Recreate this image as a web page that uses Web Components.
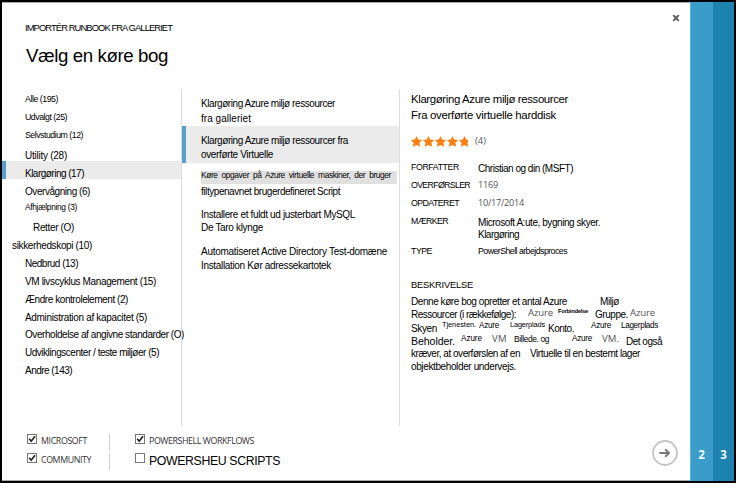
<!DOCTYPE html>
<html lang="da">
<head>
<meta charset="utf-8">
<title>Vælg en køre bog</title>
<style>
html,body{margin:0;width:736px;height:483px;overflow:hidden;background:#000}
</style>
</head>
<body>
<runbook-dialog></runbook-dialog>
<script>
// Text run with a set size, baseline (b, from the top of its row) and width (w).
class FitText extends HTMLElement {
  connectedCallback() {
    if (this.shadowRoot) return;
    const r = this.attachShadow({mode: 'open'});
    r.innerHTML = `<style>
      :host{display:block;flex:none;height:0;white-space:pre;color:#000}
      :host([ui]) span{font-family:"Open Sans","Noto Sans",sans-serif}
      :host([ui]){color:#555}
      :host([bold]) span{font-weight:700}
      span{display:inline-block;font-family:"Liberation Sans",Arial,sans-serif;vertical-align:top}
    </style><span></span>`;
    const s = r.querySelector('span');
    s.textContent = this.getAttribute('t');
    const size = +this.getAttribute('s'), b = +this.getAttribute('b'), w = +this.getAttribute('w');
    const k = this.hasAttribute('ui') ? .388 : .3465;
    s.style.fontSize = size + 'px';
    const lh = 2 * (b - k * size);
    s.style.lineHeight = Math.max(lh, 0) + 'px';
    this.style.marginLeft = (this.getAttribute('gap') || 0) + 'px';
    this.style.width = w + 'px';
    const n = s.textContent.length;
    s.style.letterSpacing = ((w - s.getBoundingClientRect().width) / n) + 'px';
  }
}
customElements.define('fit-text', FitText);

class TextRow extends HTMLElement {
  connectedCallback() {
    if (this.shadowRoot) return;
    this.attachShadow({mode: 'open'}).innerHTML = `<style>
      :host{display:flex;align-items:flex-start;box-sizing:border-box;height:var(--h,18px);padding-left:var(--p,0)}
    </style><slot></slot>`;
  }
}
customElements.define('text-row', TextRow);

class CategoryItem extends HTMLElement {
  connectedCallback() {
    if (this.shadowRoot) return;
    const a = n => this.getAttribute(n);
    this.attachShadow({mode: 'open'}).innerHTML = `<style>
      :host{display:flex;height:18px;box-sizing:border-box;padding-left:${(a('x') || 25) - 6}px;border-left:4px solid transparent}
      :host([selected]){background:#ebebeb;border-left-color:#569fd3}
    </style><fit-text s="${a('s') || 10}" b="${a('b') || 16}" w="${a('w')}" t="${a('t')}"></fit-text>`;
  }
}
customElements.define('category-item', CategoryItem);

class RunbookItem extends HTMLElement {
  connectedCallback() {
    if (this.shadowRoot) return;
    this.attachShadow({mode: 'open'}).innerHTML = `<style>
      :host{display:block;box-sizing:border-box;height:var(--h);padding-left:15px;border-left:4px solid transparent}
      :host([selected]){background:#ebebeb;border-left-color:#569fd3}
    </style><slot></slot>`;
  }
}
customElements.define('runbook-item', RunbookItem);

class CheckBox extends HTMLElement {
  connectedCallback() {
    if (this.shadowRoot) return;
    const on = this.hasAttribute('checked');
    this.attachShadow({mode: 'open'}).innerHTML = `<style>
      :host{display:flex;height:19px;gap:4px}
      svg{display:block;flex:none}
    </style><svg width="10" height="11" viewBox="0 0 10 11"><rect x=".5" y=".5" width="9" height="9" fill="#fff" stroke="#777"/>${on ? '<path d="M2.2 4.8L4.2 7.2L8 2.3" fill="none" stroke="#222" stroke-width="1.7"/>' : ''}</svg><slot></slot>`;
  }
}
customElements.define('check-box', CheckBox);

class StarRating extends HTMLElement {
  connectedCallback() {
    if (this.shadowRoot) return;
    const p = 'M5.5 0L7.2 3.5L11.1 4.1L8.4 6.8L9.2 10.8L5.5 9.1L1.8 10.8L2.6 6.8L-.1 4.1L3.8 3.5Z';
    let stars = '';
    for (let i = 0; i < 5; i++) stars += `<path transform="translate(${i * 12} 0)" d="${p}"/>`;
    this.attachShadow({mode: 'open'}).innerHTML = `<style>:host{display:block;flex:none;width:58px}svg{display:block}</style>
      <svg width="57" height="11" viewBox="0 0 57 11" fill="#ff8010">${stars}</svg>`;
  }
}
customElements.define('star-rating', StarRating);

class StepStrip extends HTMLElement {
  connectedCallback() {
    if (this.shadowRoot) return;
    this.attachShadow({mode: 'open'}).innerHTML = `<style>
      :host{display:flex;justify-content:center;align-items:flex-end;box-sizing:border-box;padding-bottom:18px;
        font:700 11.5px/16px "Open Sans","Noto Sans",sans-serif;color:#f0f8fc}
    </style><slot></slot>`;
  }
}
customElements.define('step-strip', StepStrip);

class RunbookDialog extends HTMLElement {
  connectedCallback() {
    this.attachShadow({mode: 'open'}).innerHTML = `<style>
      :host{display:grid;grid-template-columns:688px 23px 21px;width:736px;height:483px;box-sizing:border-box;
        border:2px solid #000;background:#fff}
      .page{display:flex;flex-direction:column;box-sizing:border-box;height:479px;border-top:1px solid #aaa;border-bottom:1px solid #aaa}
      header{display:flex;flex:none;height:86px;justify-content:space-between}
      .head{padding-left:23px}
      .close{display:block;margin:11px 10px 0 0}
      .cols{display:grid;flex:none;grid-template-columns:179px 1px 217px 1px 1fr;height:337px}
      .line{background:#dcdcdc}
      .mark{background:#e0e0e0;width:196px}
      .detail{padding-left:11px}
      .rating{display:flex;gap:6px;height:24px}
      footer{display:flex;flex:none;box-sizing:border-box;height:54px;padding-top:8px}
      .a{width:82px;padding-left:25px}
      .b{padding-left:25px;flex:1}
      .sep{width:1px;height:17px;background:#d5d5d5;margin-bottom:2px}
      .next{display:block;margin:5px 11px 0 0}
      .s2{background:#3a9dc9;box-shadow:inset 1px 0 #69b7d9}
      .s3{background:#1e82b0}
    </style>
    <div class="page">
      <header>
        <div class="head">
          <text-row style="--h:30px"><fit-text s="9.4" b="28" w="147" t="IMPORTÉR RUNBOOK FRA GALLERIET"></fit-text></text-row>
          <text-row style="--h:40px"><fit-text gap="1" s="18.7" b="29" w="142" t="Vælg en køre bog"></fit-text></text-row>
        </div>
        <svg class="close" width="8" height="8" viewBox="0 0 8 8"><path d="M1.2 1.2L6.8 6.8M6.8 1.2L1.2 6.8" stroke="#555" stroke-width="1.8"/></svg>
      </header>
      <div class="cols">
        <nav>
          <category-item s="8.8" b="14" w="33" t="Alle (195)"></category-item>
          <category-item s="8.8" b="14" w="42" t="Udvalgt (25)"></category-item>
          <category-item s="8.8" b="14" w="58" t="Selvstudium (12)"></category-item>
          <category-item w="42" t="Utility (28)"></category-item>
          <category-item selected w="59" t="Klargøring (17)"></category-item>
          <category-item w="65" t="Overvågning (6)"></category-item>
          <category-item s="8.4" b="13.5" w="52" t="Afhjælpning (3)"></category-item>
          <category-item x="33" w="41" t="Retter (O)"></category-item>
          <category-item x="12" w="80" t="sikkerhedskopi (10)"></category-item>
          <category-item w="53" t="Nedbrud (13)"></category-item>
          <category-item w="131" t="VM livscyklus Management (15)"></category-item>
          <category-item w="103" t="Ændre kontrolelement (2)"></category-item>
          <category-item w="122" t="Administration af kapacitet (5)"></category-item>
          <category-item b="15" w="159" t="Overholdelse af angivne standarder (O)"></category-item>
          <category-item b="15" w="134" t="Udviklingscenter / teste miljøer (5)"></category-item>
          <category-item b="15" w="47" t="Andre (143)"></category-item>
        </nav>
        <div class="line"></div>
        <div>
          <runbook-item style="--h:37px">
            <text-row style="--h:15px"><fit-text s="10" b="18" w="134" t="Klargøring Azure miljø ressourcer"></fit-text></text-row>
            <text-row><fit-text s="10" b="18" w="50" t="fra galleriet"></fit-text></text-row>
          </runbook-item>
          <runbook-item selected style="--h:37px">
            <text-row style="--h:15px"><fit-text s="10" b="18" w="147" t="Klargøring Azure miljø ressourcer fra"></fit-text></text-row>
            <text-row><fit-text s="10" b="17" w="72" t="overførte Virtuelle"></fit-text></text-row>
          </runbook-item>
          <runbook-item style="--h:41px;padding-top:8px">
            <text-row class="mark" style="--h:13px"><fit-text s="8.4" b="7.5" w="190" style="word-spacing:2px" t="Køre opgaver på Azure virtuelle maskiner, der bruger"></fit-text></text-row>
            <text-row><fit-text s="10" b="11" w="139" t="filtypenavnet brugerdefineret Script"></fit-text></text-row>
          </runbook-item>
          <runbook-item style="--h:37px">
            <text-row style="--h:14px"><fit-text s="10" b="14" w="154" t="Installere et fuldt ud justerbart MySQL"></fit-text></text-row>
            <text-row><fit-text s="10" b="13" w="62" t="De Taro klynge"></fit-text></text-row>
          </runbook-item>
          <runbook-item style="--h:37px">
            <text-row style="--h:14px"><fit-text s="10" b="14" w="186" t="Automatiseret Active Directory Test-domæne"></fit-text></text-row>
            <text-row><fit-text s="10" b="14" w="130" t="Installation Kør adressekartotek"></fit-text></text-row>
          </runbook-item>
        </div>
        <div class="line"></div>
        <div class="detail">
          <text-row style="--h:15px"><fit-text s="11.4" b="14" w="157" t="Klargøring Azure miljø ressourcer"></fit-text></text-row>
          <text-row style="--h:32px"><fit-text s="11.4" b="15" w="145" t="Fra overførte virtuelle harddisk"></fit-text></text-row>
          <div class="rating"><star-rating></star-rating><fit-text ui s="9.4" b="9" w="11" t="(4)"></fit-text></div>
          <text-row><fit-text s="8.8" b="11" w="48" t="FORFATTER"></fit-text><fit-text gap="19" s="10" b="12.5" w="95" t="Christian og din (MSFT)"></fit-text></text-row>
          <text-row><fit-text s="8.8" b="11" w="59" t="OVERFØRSLER"></fit-text><fit-text ui gap="8" s="9.2" b="10.5" w="20" t="1169"></fit-text></text-row>
          <text-row><fit-text s="8.8" b="11" w="48" t="OPDATERET"></fit-text><fit-text ui gap="19" s="9.2" b="10.5" w="46" t="10/17/2014"></fit-text></text-row>
          <text-row style="--h:12px"><fit-text s="8.8" b="11" w="37" t="MÆRKER"></fit-text><fit-text gap="30" s="10" b="12.5" w="122" t="Microsoft A:ute, bygning skyer."></fit-text></text-row>
          <text-row style="--p:67px"><fit-text s="10" b="12.5" w="41" t="Klargøring"></fit-text></text-row>
          <text-row style="--h:33px"><fit-text s="8.8" b="11" w="21" t="TYPE"></fit-text><fit-text gap="46" s="8.8" b="11" w="89" t="PowerShell arbejdsproces"></fit-text></text-row>
          <text-row style="--h:17px"><fit-text s="9.4" b="11" w="62" t="BESKRIVELSE"></fit-text></text-row>
          <text-row style="--h:13px"><fit-text s="10" b="11" w="156" t="Denne køre bog opretter et antal Azure"></fit-text><fit-text gap="33" s="10" b="11" w="19" t="Miljø"></fit-text></text-row>
          <text-row style="--h:13px"><fit-text s="10" b="11" w="105" t="Ressourcer (i rækkefølge):"></fit-text><fit-text ui gap="12" s="9.6" b="10" w="25" t="Azure"></fit-text><fit-text gap="5" s="5.8" b="7" w="30" bold t="Forbindelse"></fit-text><fit-text gap="7" s="10" b="11" w="33" t="Gruppe."></fit-text><fit-text ui gap="2" s="9.6" b="10" w="25" t="Azure"></fit-text></text-row>
          <text-row style="--h:13px"><fit-text s="10" b="12" w="26" t="Skyen"></fit-text><fit-text gap="5" s="7.4" b="7.5" w="34" t="Tjenesten."></fit-text><fit-text gap="3" s="8.2" b="9" w="20" t="Azure"></fit-text><fit-text gap="11" s="7.4" b="8" w="35" t="Lagerplads"></fit-text><fit-text gap="3" s="10" b="12" w="26" t="Konto."></fit-text><fit-text gap="17" s="8.2" b="9" w="20" t="Azure"></fit-text><fit-text gap="10" s="8.2" b="9" w="37" t="Lagerplads"></fit-text></text-row>
          <text-row style="--h:14px"><fit-text s="10.6" b="12" w="44" t="Beholder."></fit-text><fit-text gap="6" s="8.2" b="8.5" w="21" t="Azure"></fit-text><fit-text ui gap="10" s="9.6" b="10" w="15" t="VM"></fit-text><fit-text gap="7" s="8.4" b="9.5" w="35" t="Billede. og"></fit-text><fit-text gap="23" s="8.2" b="8.5" w="20" t="Azure"></fit-text><fit-text ui gap="10" s="9.6" b="10" w="17" t="VM."></fit-text><fit-text gap="7" s="10" b="12" w="36" t="Det også"></fit-text></text-row>
          <text-row style="--h:13px"><fit-text s="10" b="10" w="109" t="kræver, at overførslen af en"></fit-text><fit-text gap="10" s="10" b="10" w="110" t="Virtuelle til en bestemt lager"></fit-text></text-row>
          <text-row style="--h:13px"><fit-text s="10" b="10" w="105" t="objektbeholder undervejs."></fit-text></text-row>
        </div>
      </div>
      <footer>
        <div class="a">
          <check-box checked><fit-text ui s="8.8" b="10.5" w="46" style="color:#333" t="MICROSOFT"></fit-text></check-box>
          <check-box checked><fit-text ui s="8.8" b="10.5" w="50" style="color:#333" t="COMMUNITY"></fit-text></check-box>
        </div>
        <div><div class="sep"></div><div class="sep"></div></div>
        <div class="b">
          <check-box checked><fit-text ui s="8.8" b="10.5" w="105" style="color:#333" t="POWERSHELL WORKFLOWS"></fit-text></check-box>
          <check-box><fit-text s="12.3" b="13" w="131" t="POWERSHEU SCRIPTS"></fit-text></check-box>
        </div>
        <svg class="next" width="28" height="28" viewBox="0 0 28 28"><circle cx="14" cy="14" r="12" fill="#fff" stroke="#c4c4c4" stroke-width="1.8"/><path d="M8.3 14H17.5M14.2 10.2L18 14L14.2 17.8" fill="none" stroke="#777" stroke-width="2"/></svg>
      </footer>
    </div>
    <step-strip class="s2">2</step-strip>
    <step-strip class="s3">3</step-strip>`;
  }
}
customElements.define('runbook-dialog', RunbookDialog);
</script>
</body>
</html>
